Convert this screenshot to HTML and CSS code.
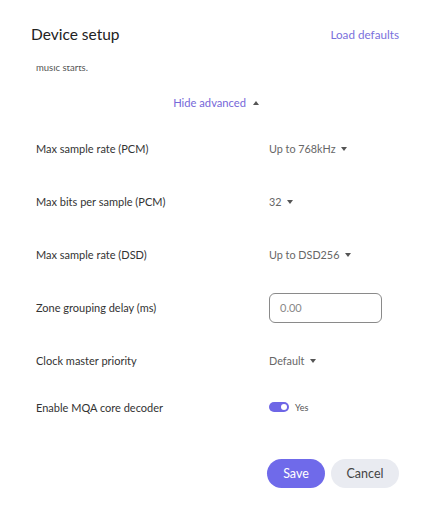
FILE: index.html
```html
<!DOCTYPE html>
<html>
<head>
<meta charset="utf-8">
<link rel="stylesheet" href="styles.css">
</head>
<body>
<div class="dialog">
  <header class="header">
    <h1 class="title">Device setup</h1>
    <a class="link">Load defaults</a>
  </header>
  <div class="scroll">
    <p class="intro">music starts.</p>
    <div class="toggle-adv">Hide advanced <span class="up"></span></div>
    <div class="rows">
      <div class="row"><span class="label">Max sample rate (PCM)</span><span class="select">Up to 768kHz <span class="caret"></span></span></div>
      <div class="row"><span class="label">Max bits per sample (PCM)</span><span class="select">32 <span class="caret"></span></span></div>
      <div class="row"><span class="label">Max sample rate (DSD)</span><span class="select">Up to DSD256 <span class="caret"></span></span></div>
      <div class="row"><span class="label">Zone grouping delay (ms)</span><span class="input">0.00</span></div>
      <div class="row"><span class="label">Clock master priority</span><span class="select">Default <span class="caret"></span></span></div>
      <div class="row last"><span class="label">Enable MQA core decoder</span><span class="switch-wrap"><span class="switch"><span class="knob"></span></span><span class="yes">Yes</span></span></div>
    </div>
  </div>
  <footer class="footer">
    <button class="btn save">Save</button>
    <button class="btn cancel">Cancel</button>
  </footer>
</div>
</body>
</html>
```
FILE: styles.css
```css
* { box-sizing: border-box; }
html, body { margin: 0; padding: 0; background: #fff; }
body { font-family: Lato, "Open Sans", sans-serif; color: #333; width: 430px; height: 512px; overflow: hidden; }
.dialog { display: flex; flex-direction: column; }
.header { height: 66px; display: flex; justify-content: space-between; align-items: flex-start; padding: 23px 31px 0 31px; }
.title { margin: 0; font-size: 15.5px; font-weight: 400; color: #222; line-height: 22px; }
.link { font-size: 11.7px; color: #7a70dc; line-height: 22px; }
.scroll { overflow: hidden; }
.intro { margin: -4px 0 0 36px; font-size: 9.5px; line-height: 12px; color: #555; height: 12px; }
.toggle-adv { margin-top: 21px; height: 16px; line-height: 16px; text-align: center; font-size: 11.2px; color: #7668d9; padding-left: 2px; }
.up { display: inline-block; width: 0; height: 0; border-left: 3.5px solid transparent; border-right: 3.5px solid transparent; border-bottom: 4px solid #555; vertical-align: middle; margin-left: 4px; margin-top: -3px; }
.rows { margin-top: 11px; padding-left: 36px; }
.row { display: grid; grid-template-columns: 233px 1fr; align-items: center; height: 53px; font-size: 11px; }
.row.last { height: 40px; }
.label { color: #333; }
.select { color: #666; font-size: 10.8px; }
.caret { display: inline-block; width: 0; height: 0; border-left: 3.5px solid transparent; border-right: 3.5px solid transparent; border-top: 4px solid #555; vertical-align: middle; margin-left: 3px; margin-top: -2px; }
.input { width: 113px; height: 30px; border: 1px solid #8a8a8a; border-radius: 6px; padding: 0 10px; line-height: 28px; color: #888; font-size: 11px; }
.switch-wrap { display: flex; align-items: center; gap: 6px; }
.switch { width: 20px; height: 10px; border-radius: 5px; background: #6e66e6; position: relative; display: inline-block; }
.knob { position: absolute; right: 2px; top: 2px; width: 6px; height: 6px; border-radius: 50%; background: #fff; }
.yes { font-size: 9px; color: #555; }
.footer { display: flex; justify-content: flex-end; gap: 6px; padding: 0 31px; margin-top: 32px; }
.btn { border: none; height: 29px; border-radius: 15px; font-family: Lato, sans-serif; font-size: 12.5px; padding: 0; }
.save { width: 58px; background: #6f6aea; color: #fff; }
.cancel { width: 68px; background: #e9ebf1; color: #444; }
```
